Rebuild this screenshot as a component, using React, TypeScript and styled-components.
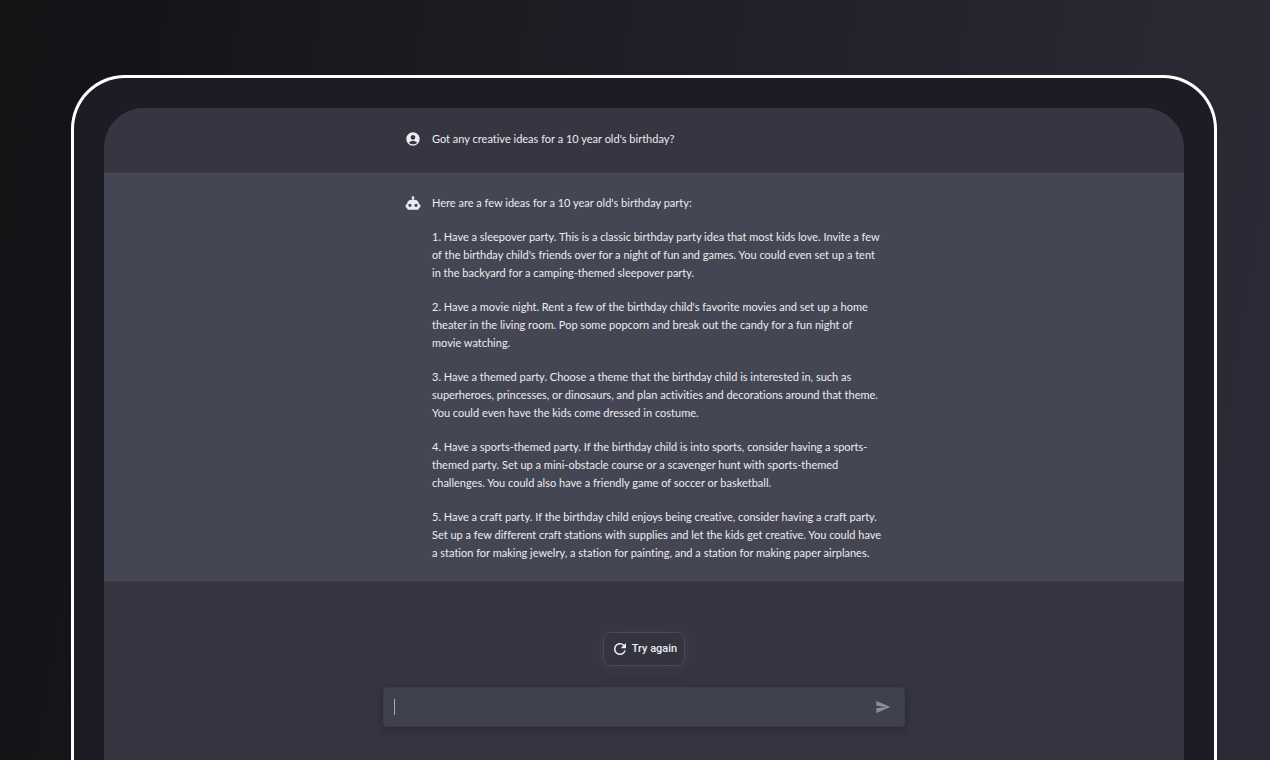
import React from "react";
import styled, { createGlobalStyle } from "styled-components";
import { MdAccountCircle, MdRefresh, MdSend } from "react-icons/md";

const GlobalStyle = createGlobalStyle`
  * { box-sizing: border-box; }
  body {
    margin: 0;
    background: #131316;
    font-family: Lato, "Noto Sans", sans-serif;
    font-variant-ligatures: none;
  }
`;

const Page = styled.div`
  min-height: 100vh;
  display: flex;
  padding: 75px 53px 0 71px;
  background: linear-gradient(100deg, #131316 0%, #151519 12%, #1e1e26 45%, #292833 85%, #2b2a36 100%);
`;

const Device = styled.div`
  flex: 1;
  min-width: 0;
  display: flex;
  padding: 30px 30px 0;
  border: 3px solid #ffffff;
  border-bottom: 0;
  border-radius: 54px 54px 0 0;
  background: #1c1c24;
`;

const Screen = styled.main`
  flex: 1;
  min-width: 0;
  overflow: hidden;
  border-radius: 40px 40px 0 0;
  background: #363541;
  color: #ececf1;
`;

const MessageRow = styled.section<{ $reply?: boolean }>`
  display: flex;
  justify-content: center;
  padding: ${(p) => (p.$reply ? "21px 24px 19px" : "22px 24px 24px")};
  border-bottom: 1px solid #3d3c49;
  background: ${(p) => (p.$reply ? "#444654" : "#363541")};
`;

const MessageBody = styled.div`
  display: flex;
  gap: 11px;
  width: 100%;
  max-width: 478px;
`;

const Avatar = styled.span`
  flex: none;
  display: flex;
  align-items: center;
  width: 16px;
  height: 17px;
`;

const MessageText = styled.div`
  display: flex;
  flex-direction: column;
  gap: 16px;
  font-size: 11px;
  line-height: 18px;
`;

const Paragraph = styled.p`
  margin: 0;
`;

const Line = styled.span`
  display: block;
  white-space: nowrap;
`;

const Composer = styled.form`
  display: flex;
  flex-direction: column;
  align-items: center;
  gap: 21px;
  padding: 50px 24px 33px;
`;

const RetryButton = styled.button`
  display: flex;
  align-items: center;
  gap: 3px;
  height: 34px;
  padding: 0 7px;
  border: 1px solid #4a4956;
  border-radius: 8px;
  background: #343440;
  box-shadow: 0 0 16px rgba(86, 84, 104, 0.25);
  color: #ececf1;
  font: 500 11px/16px Roboto, sans-serif;
`;

const Field = styled.div`
  display: flex;
  align-items: center;
  width: 100%;
  max-width: 522px;
  height: 40px;
  padding: 0 13px 0 10px;
  border: 1px solid #3c3c49;
  border-radius: 4px;
  background: #40414f;
  box-shadow: 0 3px 12px rgba(20, 20, 28, 0.4);
`;

const Caret = styled.span`
  width: 1px;
  height: 16px;
  background: #a9a9b6;
`;

const PromptInput = styled.input`
  flex: 1;
  min-width: 0;
  padding: 0;
  border: 0;
  outline: 0;
  background: transparent;
  color: #ececf1;
  font: inherit;
  font-size: 11px;
`;

const SendButton = styled.button`
  display: flex;
  padding: 0;
  border: 0;
  background: transparent;
  color: #8e8ea0;
`;

const RobotIcon = () => (
  <svg width="16" height="16" viewBox="0 0 24 24" fill="currentColor" aria-hidden="true">
    <path d="M12 2a2 2 0 0 1 2 2c0 .74-.4 1.39-1 1.73V7h1a7 7 0 0 1 7 7h1a1 1 0 0 1 1 1v3a1 1 0 0 1-1 1h-1v1a2 2 0 0 1-2 2H5a2 2 0 0 1-2-2v-1H2a1 1 0 0 1-1-1v-3a1 1 0 0 1 1-1h1a7 7 0 0 1 7-7h1V5.73c-.6-.34-1-.99-1-1.73a2 2 0 0 1 2-2M7.5 13a2.5 2.5 0 0 0 0 5 2.5 2.5 0 0 0 0-5m9 0a2.5 2.5 0 0 0 0 5 2.5 2.5 0 0 0 0-5Z" />
  </svg>
);

const reply: string[][] = [
  ["Here are a few ideas for a 10 year old's birthday party:"],
  [
    "1. Have a sleepover party. This is a classic birthday party idea that most kids love. Invite a few",
    "of the birthday child's friends over for a night of fun and games. You could even set up a tent",
    "in the backyard for a camping-themed sleepover party.",
  ],
  [
    "2. Have a movie night. Rent a few of the birthday child's favorite movies and set up a home",
    "theater in the living room. Pop some popcorn and break out the candy for a fun night of",
    "movie watching.",
  ],
  [
    "3. Have a themed party. Choose a theme that the birthday child is interested in, such as",
    "superheroes, princesses, or dinosaurs, and plan activities and decorations around that theme.",
    "You could even have the kids come dressed in costume.",
  ],
  [
    "4. Have a sports-themed party. If the birthday child is into sports, consider having a sports-",
    "themed party. Set up a mini-obstacle course or a scavenger hunt with sports-themed",
    "challenges. You could also have a friendly game of soccer or basketball.",
  ],
  [
    "5. Have a craft party. If the birthday child enjoys being creative, consider having a craft party.",
    "Set up a few different craft stations with supplies and let the kids get creative. You could have",
    "a station for making jewelry, a station for painting, and a station for making paper airplanes.",
  ],
];

export default function App() {
  return (
    <>
      <GlobalStyle />
      <Page>
        <Device>
          <Screen>
            <MessageRow>
              <MessageBody>
                <Avatar><MdAccountCircle size={16} /></Avatar>
                <MessageText>
                  <Paragraph>Got any creative ideas for a 10 year old's birthday?</Paragraph>
                </MessageText>
              </MessageBody>
            </MessageRow>
            <MessageRow $reply>
              <MessageBody>
                <Avatar><RobotIcon /></Avatar>
                <MessageText>
                  {reply.map((lines) => (
                    <Paragraph key={lines[0]}>
                      {lines.map((line) => <Line key={line}>{line}</Line>)}
                    </Paragraph>
                  ))}
                </MessageText>
              </MessageBody>
            </MessageRow>
            <Composer onSubmit={(e) => e.preventDefault()}>
              <RetryButton type="button">
                <MdRefresh size={18} />
                Try again
              </RetryButton>
              <Field>
                <Caret />
                <PromptInput type="text" aria-label="Message" />
                <SendButton type="submit" aria-label="Send">
                  <MdSend size={16} />
                </SendButton>
              </Field>
            </Composer>
          </Screen>
        </Device>
      </Page>
    </>
  );
}
